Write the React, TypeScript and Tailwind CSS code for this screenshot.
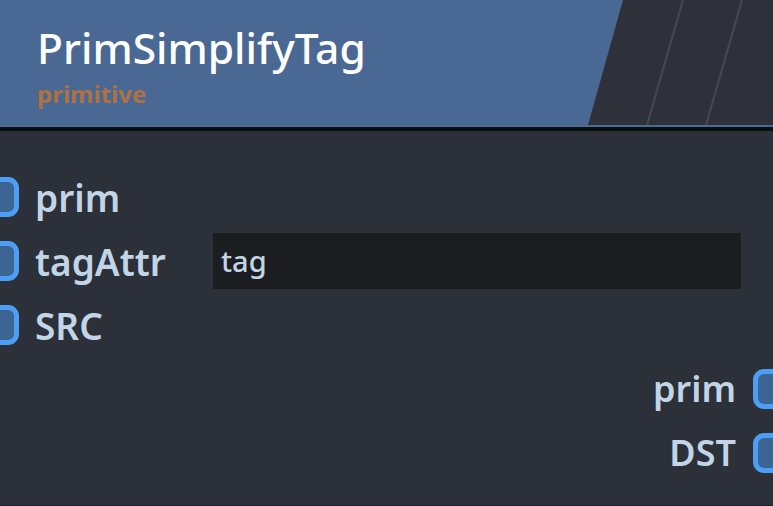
import React from "react";

const font = { fontFamily: '"Noto Sans", "Open Sans", sans-serif' };

function Socket({ side }: { side: "left" | "right" }) {
  return (
    <div
      className={`h-[40px] w-[40px] shrink-0 rounded-[11px] border-[5px] border-[#4d9ef5] bg-[#3c6594] ${
        side === "left" ? "-ml-[21px]" : "-mr-[20px]"
      }`}
    />
  );
}

function InputRow({ label, children }: { label: string; children?: React.ReactNode }) {
  return (
    <div className="flex h-[64px] items-center">
      <Socket side="left" />
      <span className="ml-[16px] w-[178px] text-[37px] font-semibold leading-none text-[#c2d5e6]">{label}</span>
      {children}
    </div>
  );
}

function OutputRow({ label }: { label: string }) {
  return (
    <div className="flex h-[64px] items-center justify-end">
      <span className="mr-[17px] text-[36px] font-semibold leading-none text-[#c2d5e6]">{label}</span>
      <Socket side="right" />
    </div>
  );
}

export default function App() {
  return (
    <div className="flex h-[506px] w-full flex-col overflow-hidden bg-[#2c3038]" style={font}>
      <div className="relative h-[125px] shrink-0 bg-[#496894]">
        <svg className="absolute right-0 top-0" width="185" height="125" viewBox="0 0 185 125">
          <polygon points="35,0 185,0 185,125 0,125" fill="#2e3139" />
          <line x1="95" y1="0" x2="59" y2="125" stroke="#47494f" strokeWidth="2" />
          <line x1="154" y1="0" x2="118" y2="125" stroke="#47494f" strokeWidth="2" />
        </svg>
        <div className="relative pl-[37px] pt-[22px]">
          <div className="text-[42.5px] font-medium leading-[52px] text-white">PrimSimplifyTag</div>
          <div className="mt-[6px] text-[24px] font-bold leading-[28px] text-[#ae7242]">primitive</div>
        </div>
      </div>
      <div className="h-[2px] shrink-0 bg-[#4b6c99]" />
      <div className="h-[4px] shrink-0 bg-[#0c0d0f]" />
      <div className="flex flex-1 flex-col pt-[34px]">
        <InputRow label="prim" />
        <InputRow label="tagAttr">
          <div className="flex h-[56px] w-[528px] items-center bg-[#1b1d21] pl-[8px] text-[29px] font-medium text-[#c2d5e6]">
            tag
          </div>
        </InputRow>
        <InputRow label="SRC" />
        <OutputRow label="prim" />
        <OutputRow label="DST" />
      </div>
      <div className="h-[1px] shrink-0 bg-[#1d2026]" />
    </div>
  );
}
